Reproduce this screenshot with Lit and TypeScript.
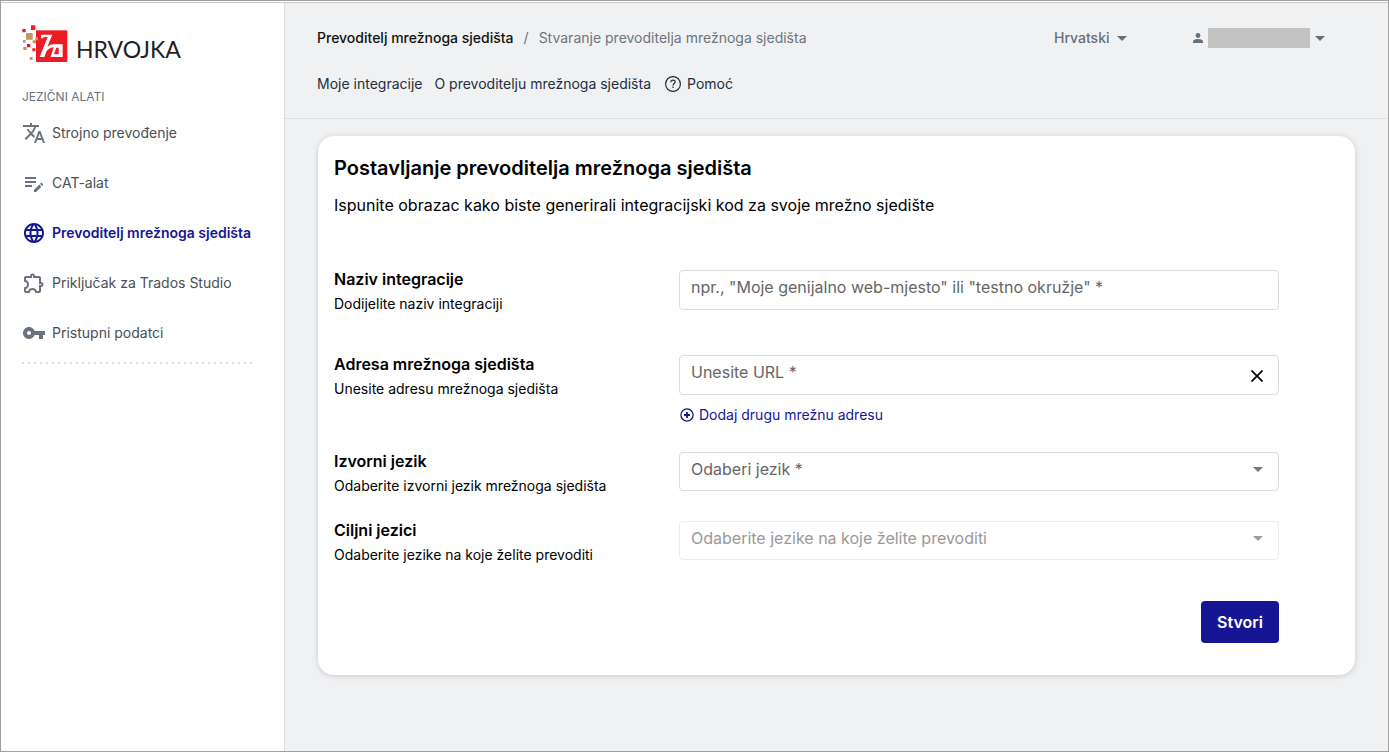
import { LitElement, html, css, svg } from "lit";
import { customElement, property, state } from "lit/decorators.js";
import { classMap } from "lit/directives/class-map.js";

const icons: Record<string, string> = {
  translate:
    "M12.87 15.07l-2.54-2.51.03-.03c1.74-1.94 2.98-4.17 3.71-6.53H17V4h-7V2H8v2H1v1.99h11.17C11.5 7.92 10.44 9.75 9 11.35 8.07 10.32 7.3 9.19 6.69 8h-2c.73 1.63 1.73 3.17 2.98 4.56l-5.09 5.02L4 19l5-5 3.11 3.11.76-2.04zM18.5 10h-2L12 22h2l1.12-3h4.75L21 22h2l-4.5-12zm-2.62 7l1.62-4.33L19.12 17h-3.24z",
  edit:
    "M3 10h11v2H3v-2zm0-2h11V6H3v2zm0 8h7v-2H3v2zm15.01-3.13.71-.71c.39-.39 1.02-.39 1.41 0l.71.71c.39.39.39 1.02 0 1.41l-.71.71-2.12-2.12zm-.71.71-5.3 5.3V21h2.12l5.3-5.3-2.12-2.12z",
  globe:
    "M11.99 2C6.47 2 2 6.48 2 12s4.47 10 9.99 10C17.52 22 22 17.52 22 12S17.52 2 11.99 2zm6.93 6h-2.95c-.32-1.25-.78-2.45-1.38-3.56 1.84.63 3.37 1.91 4.33 3.56zM12 4.04c.83 1.2 1.48 2.53 1.91 3.96h-3.82c.43-1.43 1.08-2.76 1.91-3.96zM4.26 14C4.1 13.36 4 12.69 4 12s.1-1.36.26-2h3.38c-.08.66-.14 1.32-.14 2 0 .68.06 1.34.14 2H4.26zm.82 2h2.95c.32 1.25.78 2.45 1.38 3.56-1.84-.63-3.37-1.9-4.33-3.56zm2.95-8H5.08c.96-1.66 2.49-2.93 4.33-3.56C8.81 5.55 8.35 6.75 8.03 8zM12 19.96c-.83-1.2-1.48-2.53-1.91-3.96h3.82c-.43 1.43-1.08 2.76-1.91 3.96zM14.34 14H9.66c-.09-.66-.16-1.32-.16-2 0-.68.07-1.35.16-2h4.68c.09.65.16 1.32.16 2 0 .68-.07 1.34-.16 2zm.25 5.56c.6-1.11 1.06-2.31 1.38-3.56h2.95c-.96 1.65-2.49 2.93-4.33 3.56zM16.36 14c.08-.66.14-1.32.14-2 0-.68-.06-1.34-.14-2h3.38c.16.64.26 1.31.26 2s-.1 1.36-.26 2h-3.38z",
  puzzle:
    "M10.5 4.5c.28 0 .5.22.5.5v2h6v6h2c.28 0 .5.22.5.5s-.22.5-.5.5h-2v6h-2.12c-.68-1.75-2.39-3-4.38-3s-3.7 1.25-4.38 3H4v-2.12c1.75-.68 3-2.39 3-4.38 0-1.99-1.24-3.7-2.99-4.38L4 7h6V5c0-.28.22-.5.5-.5m0-2C9.12 2.5 8 3.62 8 5H4c-1.1 0-1.99.9-1.99 2v3.8h.29c1.49 0 2.7 1.21 2.7 2.7s-1.21 2.7-2.7 2.7H2V20c0 1.1.9 2 2 2h3.8v-.3c0-1.49 1.21-2.7 2.7-2.7s2.7 1.21 2.7 2.7v.3H17c1.1 0 2-.9 2-2v-4c1.38 0 2.5-1.12 2.5-2.5S20.38 11 19 11V7c0-1.1-.9-2-2-2h-4c0-1.38-1.12-2.5-2.5-2.5z",
  key:
    "M12.65 10C11.83 7.67 9.61 6 7 6c-3.31 0-6 2.69-6 6s2.69 6 6 6c2.61 0 4.83-1.67 5.65-4H17v4h4v-4h2v-4H12.65zM7 14c-1.1 0-2-.9-2-2s.9-2 2-2 2 .9 2 2-.9 2-2 2z",
};

const caret = html`<svg class="caret" width="10" height="5" viewBox="0 0 10 5" aria-hidden="true">
  <path d="M0 0h10L5 5z" fill="currentColor" />
</svg>`;

@customElement("side-nav")
export class SideNav extends LitElement {
  @property({ type: String }) current = "globe";

  private items = [
    { icon: "translate", label: "Strojno prevođenje" },
    { icon: "edit", label: "CAT-alat" },
    { icon: "globe", label: "Prevoditelj mrežnoga sjedišta" },
    { icon: "puzzle", label: "Priključak za Trados Studio" },
    { icon: "key", label: "Pristupni podatci" },
  ];

  static styles = css`
    :host {
      display: block;
      box-sizing: border-box;
      background: #fff;
      border-right: 1px solid #dcdfe2;
      padding: 22px 32px 24px 21px;
    }
    .brand {
      display: flex;
      align-items: flex-start;
      gap: 8px;
      color: #231f20;
      text-decoration: none;
    }
    .wordmark {
      font: 400 23px/28px Lato, sans-serif;
      padding-top: 10px;
    }
    h2 {
      margin: 26px 0 16px;
      font-size: 12px;
      font-weight: 400;
      line-height: 16px;
      color: #66727e;
    }
    ul {
      list-style: none;
      margin: 0;
      padding: 0 0 19px;
      display: grid;
      gap: 26px;
      background: repeating-linear-gradient(90deg, #dfe0e2 0 2px, transparent 2px 6px) left bottom / 100% 2px no-repeat;
    }
    .item {
      display: flex;
      align-items: center;
      gap: 6px;
      font-size: 14px;
      line-height: 24px;
      color: #495057;
      text-decoration: none;
      white-space: nowrap;
    }
    .item svg {
      fill: #69727d;
      flex: none;
    }
    .item.active {
      color: #161694;
      font-weight: 600;
    }
    .item.active svg {
      fill: #161694;
    }
  `;

  render() {
    return html`
      <a class="brand" href="#" aria-label="Hrvojka">
        <svg width="46" height="38" viewBox="65 74 138 114" aria-hidden="true">
          <path d="M107 90h94v95h-94z" fill="#ed1c24" />
          <path d="M92 75h13v14H92zM66 86h10v10H66zM80 131h10v10H80zM96 144h9v9h-9z" fill="#ed1c24" />
          <path
            d="M77 98h20v20H77zM97 120h10v9H97zM105 111h8v9h-8zM68 119h8v8h-8zM69 140h10v9H69zM88 170h9v9h-9z"
            fill="#c4975c"
          />
          <path
            d="M122 103h34l-15 36q9-7 20-7h26v38h-36l9-30q-12 2-21 11l-7 19h-14l24-60h-13v4h-7zM168 142l-7 20h14v-20z"
            fill="#fff"
            fill-rule="evenodd"
          />
        </svg>
        <span class="wordmark">HRVOJKA</span>
      </a>
      <nav aria-labelledby="tools">
        <h2 id="tools">JEZIČNI ALATI</h2>
        <ul>
          ${this.items.map(
            (i) => html`<li>
              <a class=${classMap({ item: true, active: i.icon === this.current })} href="#">
                <svg width="24" height="24" viewBox="0 0 24 24" aria-hidden="true">
                  ${svg`<path d=${icons[i.icon]} />`}
                </svg>
                <span>${i.label}</span>
              </a>
            </li>`
          )}
        </ul>
      </nav>
    `;
  }
}

@customElement("top-bar")
export class TopBar extends LitElement {
  static styles = css`
    :host {
      display: grid;
      gap: 26px;
      padding: 25px 63px 24px 32px;
      border-bottom: 1px solid #dcdfe2;
      font-size: 14px;
      line-height: 20px;
    }
    .row {
      display: flex;
      align-items: center;
    }
    .crumbs {
      margin-right: auto;
      gap: 10px;
      color: #6c757d;
    }
    .crumbs a {
      color: #111;
      font-weight: 500;
      text-decoration: none;
    }
    .links {
      gap: 12px;
    }
    .links a {
      display: flex;
      align-items: center;
      gap: 6px;
      color: #212f3f;
      text-decoration: none;
    }
    .links .help {
      margin-left: 2px;
    }
    .lang {
      position: relative;
      display: flex;
      align-items: center;
      color: #66707a;
    }
    .lang select {
      appearance: none;
      border: 0;
      margin: 0;
      padding: 0 17px 0 0;
      background: none;
      font: inherit;
      font-weight: 500;
      color: inherit;
    }
    .lang .caret {
      position: absolute;
      right: 0;
      pointer-events: none;
    }
    .user {
      display: flex;
      align-items: center;
      gap: 5px;
      margin-left: 66px;
      padding: 0;
      border: 0;
      background: none;
      color: #66707a;
    }
    .name {
      width: 102px;
      height: 20px;
      background: #c3c3c3;
    }
  `;

  render() {
    return html`
      <div class="row">
        <nav class="row crumbs">
          <a href="#">Prevoditelj mrežnoga sjedišta</a>
          <span>/</span>
          <span>Stvaranje prevoditelja mrežnoga sjedišta</span>
        </nav>
        <div class="lang">
          <select aria-label="Jezik">
            <option>Hrvatski</option>
          </select>
          ${caret}
        </div>
        <button class="user" type="button" aria-label="Korisnik">
          <svg width="10" height="10" viewBox="0 0 10 10" fill="currentColor" aria-hidden="true">
            <circle cx="5" cy="2.5" r="2.4" />
            <path d="M0 10V8.4C0 6.8 3.3 6 5 6s5 .8 5 2.4V10z" />
          </svg>
          <span class="name"></span>
          ${caret}
        </button>
      </div>
      <nav class="row links">
        <a href="#">Moje integracije</a>
        <a href="#">O prevoditelju mrežnoga sjedišta</a>
        <a href="#" class="help">
          <svg width="16" height="16" viewBox="0 0 16 16" fill="none" stroke="currentColor" stroke-width="1.2" aria-hidden="true">
            <circle cx="8" cy="8" r="7.4" />
            <path d="M5.8 6.2C5.8 4.9 6.7 4.2 8 4.2s2.2.8 2.2 1.9C10.2 7.5 8 7.6 8 9.4M8 10.6v1.4" />
          </svg>
          Pomoć
        </a>
      </nav>
    `;
  }
}

@customElement("integration-form")
export class IntegrationForm extends LitElement {
  @state() private url = "";

  static styles = css`
    :host {
      display: block;
      margin: 17px 33px 76px;
      padding: 20px 76px 32px 16px;
      background: #fff;
      border-radius: 16px;
      box-shadow: 0 1px 6px rgba(0, 0, 0, 0.16);
      color: #000;
      font-size: 16px;
      line-height: 24px;
    }
    h1 {
      margin: 0 0 13px;
      font-size: 20px;
      font-weight: 600;
      line-height: 24px;
    }
    p {
      margin: 0;
    }
    form {
      margin-top: 50px;
      display: grid;
      gap: 22px;
    }
    .row {
      display: grid;
      grid-template-columns: 345px 1fr;
    }
    .row.first {
      margin-bottom: 16px;
    }
    label {
      display: block;
      font-weight: 600;
      margin-bottom: 3px;
    }
    .hint {
      font-size: 14px;
      line-height: 20px;
    }
    .field {
      padding-top: 3px;
    }
    .box {
      position: relative;
    }
    input,
    select {
      display: block;
      box-sizing: border-box;
      width: 100%;
      height: 40px;
      margin: 0;
      padding: 0 40px 7px 11px;
      border: 1px solid #dcdcdc;
      border-radius: 4px;
      background: #fff;
      font: inherit;
      color: #666;
      appearance: none;
    }
    select {
      height: 39px;
      padding-bottom: 5px;
    }
    input::placeholder {
      color: #666;
      opacity: 1;
    }
    select:disabled {
      color: #999;
      border-color: #ededed;
      opacity: 1;
    }
    .box .caret {
      position: absolute;
      right: 16px;
      top: 15px;
      color: #757575;
      pointer-events: none;
    }
    .box .off {
      opacity: 0.7;
    }
    .clear {
      position: absolute;
      right: 12px;
      top: 11px;
      width: 20px;
      height: 20px;
      display: grid;
      place-items: center;
      padding: 0;
      border: 0;
      background: none;
      color: #000;
    }
    .add {
      display: flex;
      align-items: center;
      gap: 5px;
      margin-top: 8px;
      padding: 0 0 0 1px;
      border: 0;
      background: none;
      font: inherit;
      font-size: 14px;
      line-height: 24px;
      color: #161694;
    }
    .actions {
      display: flex;
      justify-content: flex-end;
      margin-top: 14px;
    }
    .submit {
      height: 42px;
      padding: 0 16px;
      border: 0;
      border-radius: 4px;
      background: #161694;
      color: #fff;
      font: inherit;
      font-weight: 600;
    }
  `;

  private onUrl(e: Event) {
    this.url = (e.target as HTMLInputElement).value;
  }

  render() {
    return html`
      <h1>Postavljanje prevoditelja mrežnoga sjedišta</h1>
      <p>Ispunite obrazac kako biste generirali integracijski kod za svoje mrežno sjedište</p>
      <form @submit=${(e: Event) => e.preventDefault()}>
        <div class="row first">
          <div>
            <label for="name">Naziv integracije</label>
            <div class="hint" id="name-hint">Dodijelite naziv integraciji</div>
          </div>
          <div class="field">
            <input
              id="name"
              type="text"
              aria-describedby="name-hint"
              placeholder='npr., "Moje genijalno web-mjesto" ili "testno okružje" *'
            />
          </div>
        </div>
        <div class="row">
          <div>
            <label for="url">Adresa mrežnoga sjedišta</label>
            <div class="hint" id="url-hint">Unesite adresu mrežnoga sjedišta</div>
          </div>
          <div class="field">
            <div class="box">
              <input
                id="url"
                type="text"
                aria-describedby="url-hint"
                placeholder="Unesite URL *"
                .value=${this.url}
                @input=${this.onUrl}
              />
              <button class="clear" type="button" aria-label="Ukloni" @click=${() => (this.url = "")}>
                <svg width="12" height="12" viewBox="0 0 12 12" stroke="currentColor" stroke-width="1.7" aria-hidden="true">
                  <path d="M.5.5l11 11M11.5.5l-11 11" />
                </svg>
              </button>
            </div>
            <button class="add" type="button">
              <svg width="14" height="14" viewBox="0 0 14 14" fill="none" stroke="currentColor" aria-hidden="true">
                <circle cx="7" cy="7" r="6.1" stroke-width="1.3" />
                <path d="M7 4v6M4 7h6" stroke-width="1.8" />
              </svg>
              Dodaj drugu mrežnu adresu
            </button>
          </div>
        </div>
        <div class="row">
          <div>
            <label for="source">Izvorni jezik</label>
            <div class="hint" id="source-hint">Odaberite izvorni jezik mrežnoga sjedišta</div>
          </div>
          <div class="field">
            <div class="box">
              <select id="source" aria-describedby="source-hint">
                <option>Odaberi jezik *</option>
              </select>
              ${caret}
            </div>
          </div>
        </div>
        <div class="row">
          <div>
            <label for="target">Ciljni jezici</label>
            <div class="hint" id="target-hint">Odaberite jezike na koje želite prevoditi</div>
          </div>
          <div class="field">
            <div class="box">
              <select id="target" aria-describedby="target-hint" disabled>
                <option>Odaberite jezike na koje želite prevoditi</option>
              </select>
              <span class="off">${caret}</span>
            </div>
          </div>
        </div>
        <div class="actions">
          <button class="submit" type="submit">Stvori</button>
        </div>
      </form>
    `;
  }
}

@customElement("app-root")
export class AppRoot extends LitElement {
  static styles = css`
    :host {
      display: flex;
      flex-direction: column;
      box-sizing: border-box;
      min-height: 100vh;
      border: 1px solid #a0a0a0;
      padding-top: 1px;
      background: #fff;
      font-family: Inter, sans-serif;
      font-size: 14px;
    }
    .shell {
      flex: 1;
      display: grid;
      grid-template-columns: 284px minmax(0, 1fr);
      border-top: 1px solid #c8c8c8;
    }
    main {
      background: #f0f1f3;
    }
  `;

  render() {
    return html`
      <div class="shell">
        <side-nav></side-nav>
        <main>
          <top-bar></top-bar>
          <integration-form></integration-form>
        </main>
      </div>
    `;
  }
}
